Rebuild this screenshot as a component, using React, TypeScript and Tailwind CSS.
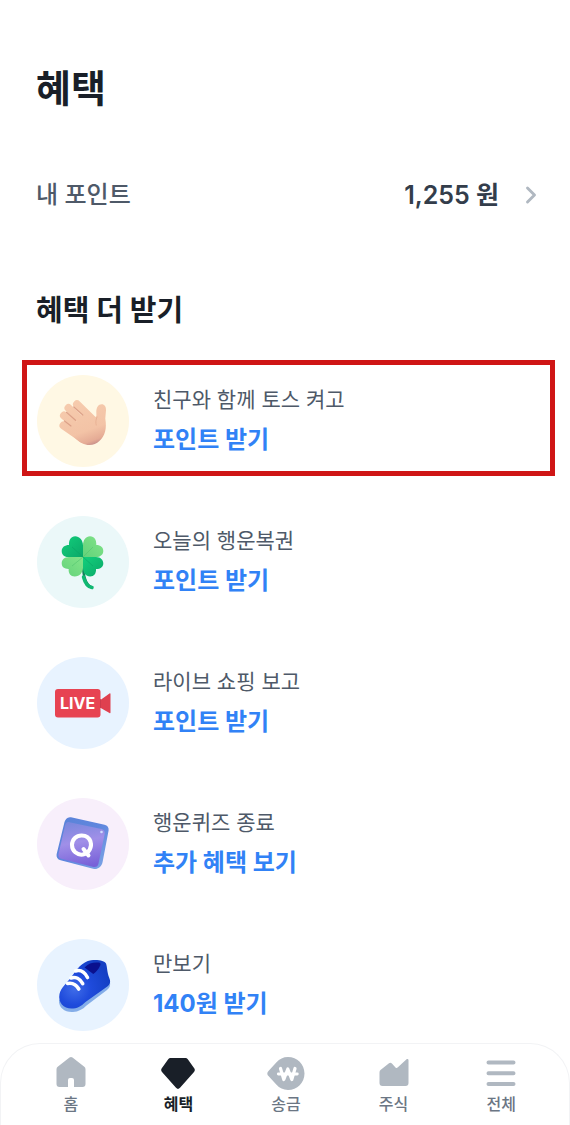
import React from 'react';
import { ChevronRight } from 'lucide-react';

function WaveIcon() {
  return (
    <svg className="h-full w-full" viewBox="0 0 92 92" aria-hidden="true">
      <defs>
        <linearGradient id="hand" gradientUnits="userSpaceOnUse" x1="38" y1="26" x2="55" y2="72">
          <stop offset="0" stopColor="#f6cbad" />
          <stop offset="0.65" stopColor="#f3c3a6" />
          <stop offset="0.88" stopColor="#e5ab95" />
          <stop offset="1" stopColor="#bd8587" />
        </linearGradient>
      </defs>
      <g stroke="url(#hand)" strokeWidth="8" strokeLinecap="round" fill="none">
        <path d="M26.500 50.500L46 64" />
        <path d="M27 40.500L46 57" />
        <path d="M31.500 33L50 51" />
        <path d="M40 29.300L57 46" />
      </g>
      <path
        d="M42 41l12-2.500c2 2 3.300 4 4.600 3.600 1.300-.5.7-2.800.7-5 0-4.500 2-7.800 5.300-7.800 3 0 4.500 2.500 4.400 6l-.7 8.200c.8 5 .8 9.500-.2 13-1.900 7.500-8 13.500-15.600 13.500-5.500 0-9.500-2.500-13.500-6L35 60z"
        fill="url(#hand)"
      />
      <path d="M29.500 37.300l9 8M36.800 32l9 8M27.500 46l6.500 5" stroke="#dca188" strokeWidth="1.200" strokeLinecap="round" fill="none" />
      <path d="M60 42c-1.300 3-1.500 5.500-.8 8" stroke="#e8b295" strokeWidth="1" strokeLinecap="round" fill="none" />
    </svg>
  );
}

function CloverIcon() {
  return (
    <svg className="h-full w-full" viewBox="0 0 92 92" aria-hidden="true">
      <defs>
        <linearGradient id="leafDark" x1="0" y1="0" x2="1" y2="1">
          <stop offset="0" stopColor="#13cf7c" />
          <stop offset="1" stopColor="#0aa868" />
        </linearGradient>
        <linearGradient id="leafLight" x1="1" y1="0" x2="0" y2="1">
          <stop offset="0" stopColor="#83e48a" />
          <stop offset="1" stopColor="#63d27a" />
        </linearGradient>
      </defs>
      <path d="M45.500 42C46 57 47 69.500 56 72" stroke="#14805a" strokeWidth="2.500" fill="none" />
      <path d="M46.500 61C48 67 51 71 55 71.500" stroke="#10b872" strokeWidth="3.400" fill="none" strokeLinecap="round" />
      <path d="M46 41H31c-4 0-6.500-2.800-6.300-6.300.2-3.300 3-5.700 7.300-5.700-.3-5 2-8.700 6.200-8.700 4 0 7.800 3.700 7.800 9.200z" fill="url(#leafDark)" />
      <path d="M46 41V29.500c0-5.500 3-9.200 7-9.200 4.500 0 6.600 3.700 6.300 8.700 4.400 0 7 2.400 7 5.900 0 3.500-2.800 6.100-7.300 6.100z" fill="url(#leafLight)" />
      <path d="M46 41H32c-4.500 0-7.300 2.800-7.300 6.300 0 3.700 2.700 5.800 7 5.700-.5 4.500 2 7.500 6 7.500 5 0 8.300-4 8.300-9z" fill="url(#leafLight)" />
      <path d="M46 41h13c4.500 0 7.300 2.900 7.300 6.400s-3 5.700-7.300 5.600c.3 4.600-2 7.500-5.800 7.500-4.500 0-7.200-4-7.200-9z" fill="url(#leafDark)" />
      <path d="M46 41L35 31M46 41l10 9" stroke="#0aa565" strokeWidth="0.600" fill="none" />
      <path d="M46 41l10-10M46 41L35 50" stroke="#52c46e" strokeWidth="0.600" fill="none" />
    </svg>
  );
}

function LiveIcon() {
  return (
    <svg className="h-full w-full" viewBox="0 0 92 92" aria-hidden="true">
      <path d="M62 44l10.500-7.600c.6-.4 1-.2 1 .5v18.700c0 .7-.5.9-1 .5L62 50z" fill="#df404f" />
      <rect x="18" y="32" width="45.500" height="28.500" rx="3" fill="#e74352" />
      <path d="M63.500 42v9" stroke="#c8394a" strokeWidth="0.800" />
      <text x="40.500" y="52" textAnchor="middle" fontSize="16" fontWeight="700" fill="#fff" className="font-['Inter',sans-serif]">
        LIVE
      </text>
    </svg>
  );
}

function QuizIcon() {
  return (
    <svg className="h-full w-full" viewBox="0 0 92 92" aria-hidden="true">
      <defs>
        <linearGradient id="cubeSide" x1="0" y1="0" x2="1" y2="1">
          <stop offset="0" stopColor="#5a83d8" />
          <stop offset="0.500" stopColor="#5f86de" />
          <stop offset="1" stopColor="#7fa8e6" />
        </linearGradient>
        <linearGradient id="cubeFace" x1="0.300" y1="0" x2="0.500" y2="1">
          <stop offset="0" stopColor="#7a88dd" />
          <stop offset="0.450" stopColor="#a08fe8" />
          <stop offset="1" stopColor="#7861d8" />
        </linearGradient>
      </defs>
      <path d="M34 19.300l33.500 7.500c3 .7 4.500 2.800 4.100 5.700l-6 31.500c-.5 2.500-1.500 4-3 5.200-2 1.600-4 2.200-6.500 1.600l-32.500-8.500c-3-.8-4.500-3-4-6l7.600-31c.7-3.700 3.500-6.800 6.800-6z" fill="url(#cubeSide)" />
      <path d="M32.500 24.200l32 6.700c2.500.5 3.700 2.400 3.200 5l-6.200 29.600c-.6 2.800-2.400 4-5 3.400l-32-8.100c-2.400-.6-3.500-2.300-3-4.800l6.500-28.300c.6-2.700 2-4 4.500-3.500z" fill="url(#cubeFace)" />
      <circle cx="64.500" cy="34" r="1.300" fill="#cfdcff" />
      <path d="M53.500 43.500c1.800 5.500-1.500 12-7.500 13-6 .9-11-3.500-11-9.500 0-5.600 4.500-9.800 9.800-9.600 4.200.1 7.500 2.500 8.700 6.100z" fill="none" stroke="#fff" strokeWidth="4" />
      <path d="M46.500 51l5 6.500" stroke="#fff" strokeWidth="4" strokeLinecap="round" />
    </svg>
  );
}

function ShoeIcon() {
  return (
    <svg className="h-full w-full" viewBox="0 0 92 92" aria-hidden="true">
      <defs>
        <radialGradient id="shoe" cx="0.300" cy="0.600" r="0.700">
          <stop offset="0" stopColor="#3f6ce8" />
          <stop offset="0.450" stopColor="#1f4bdc" />
          <stop offset="1" stopColor="#143fc4" />
        </radialGradient>
      </defs>
      <path d="M22 61c-.5 8 6 12.500 14 12 5.500-.4 9.500-2.500 13.500-6.500L70 51c3-2.500 3.400-4.500 3-8z" fill="#84ade8" />
      <path d="M22.500 55c1.500-6.500 7-10.500 12.200-17.500C39.500 31 45 22.500 54 21.300c6.500-.9 13.700.2 15 3.200 1.200 3 1.100 9.500 3.300 14.500 1.700 4 .7 6.500-2.300 8.800L48.500 63c-4.500 4.500-8.500 6.600-14 6.600C26.500 69.500 20.800 63.500 22.500 55z" fill="url(#shoe)" />
      <path d="M47.500 28.500c4-4.300 8.500-5.300 14-4.900 2 .2 2.500 1.300 1.600 3.200-1.600 3.500-3.600 6-6.800 8.200-2.700-1.800-5.200-4.300-8.800-6.500z" fill="#0a108e" />
      <path d="M38.500 32c5-1.500 9 .8 12 6.500M34 39c4.500-1.500 9 .7 11.700 5.700M30.500 44.500c5-1 8.500.8 11.300 5.500" stroke="#fff" strokeWidth="3.600" strokeLinecap="round" fill="none" />
    </svg>
  );
}

function HomeIcon() {
  return (
    <svg className="h-9 w-9" viewBox="0 0 36 36" fill="#b0b8c1" aria-hidden="true">
      <path d="M16.500 3.600a2.500 2.500 0 0 1 3 0l11.800 9.200c.8.600 1.200 1.500 1.200 2.500v14.700a3 3 0 0 1-3 3H21v-7a2 2 0 0 0-2-2h-2a2 2 0 0 0-2 2v7H6.500a3 3 0 0 1-3-3V15.300c0-1 .4-1.900 1.200-2.500z" />
    </svg>
  );
}

function BenefitIcon() {
  return (
    <svg className="h-9 w-9" viewBox="0 0 36 36" fill="#191f28" aria-hidden="true">
      <path d="M10.600 4h14.800c1 0 1.800.4 2.400 1.200l6.400 9c.9 1.200.8 2.600-.2 3.700L20 33.800a2.700 2.700 0 0 1-4 0L2 17.900c-1-1.100-1.100-2.500-.2-3.700l6.400-9c.6-.8 1.400-1.200 2.400-1.200z" />
    </svg>
  );
}

function TransferIcon() {
  return (
    <svg className="h-9 w-10" viewBox="0 0 40 36" aria-hidden="true">
      <path d="M22 3c9.200 0 16.500 7.300 16.500 16.500S31.200 36 22 36c-4.800 0-8.500-2-11.500-5.200l-8-8.700c-1.600-1.700-1.600-3.500 0-5.200l8-8.700C13.500 5 17.200 3 22 3z" fill="#b0b8c1" />
      <path d="M14.500 14.500l3.300 11L21.800 15l4 10.500L29 14.500" stroke="#fff" strokeWidth="3.200" strokeLinecap="round" strokeLinejoin="round" fill="none" />
      <path d="M12.300 20h19" stroke="#fff" strokeWidth="2.800" strokeLinecap="round" />
    </svg>
  );
}

function StockIcon() {
  return (
    <svg className="h-9 w-9" viewBox="0 0 36 36" fill="#b0b8c1" aria-hidden="true">
      <path d="M3.500 18.500c0-1 .3-1.700 1-2.400l8.500-6.800c1-.8 2-.7 2.900.2L19.500 13.500c.7.700 1.400.7 2.100.1l8.700-8.100c1-.9 2.200-.5 2.200.8V29a3 3 0 0 1-3 3h-23a3 3 0 0 1-3-3z" />
    </svg>
  );
}

function MenuIcon() {
  return (
    <svg className="h-9 w-9" viewBox="0 0 36 36" stroke="#b0b8c1" strokeWidth="4" strokeLinecap="round" aria-hidden="true">
      <path d="M5.500 8.500h25M5.500 19.300h25M5.500 30h25" />
    </svg>
  );
}

const benefits = [
  { title: '친구와 함께 토스 켜고', action: '포인트 받기', bg: 'bg-[#fff8e4]', border: 'border-[#cf1515]', Icon: WaveIcon },
  { title: '오늘의 행운복권', action: '포인트 받기', bg: 'bg-[#ebf8f9]', border: 'border-transparent', Icon: CloverIcon },
  { title: '라이브 쇼핑 보고', action: '포인트 받기', bg: 'bg-[#e8f3ff]', border: 'border-transparent', Icon: LiveIcon },
  { title: '행운퀴즈 종료', action: '추가 혜택 보기', bg: 'bg-[#f8effb]', border: 'border-transparent', Icon: QuizIcon },
  { title: '만보기', action: '140원 받기', bg: 'bg-[#e8f3ff]', border: 'border-transparent', Icon: ShoeIcon },
];

const tabs = [
  { label: '홈', Icon: HomeIcon, active: false },
  { label: '혜택', Icon: BenefitIcon, active: true },
  { label: '송금', Icon: TransferIcon, active: false },
  { label: '주식', Icon: StockIcon, active: false },
  { label: '전체', Icon: MenuIcon, active: false },
];

function BenefitList() {
  return (
    <ul className="mt-[29px] flex flex-col gap-[25px] pr-[15px] pl-[22px]">
      {benefits.map(({ title, action, bg, border, Icon }) => (
        <li key={title} className={`border-5 ${border}`}>
          <a href="#" className="flex items-center gap-6 px-[10px] pt-[10px] pb-1">
            <span className={`h-[92px] w-[92px] shrink-0 overflow-hidden rounded-full ${bg}`}>
              <Icon />
            </span>
            <span className="flex flex-col pb-[2px]">
              <span className="text-[21px] leading-10 text-[#4e5968]">{title}</span>
              <span className="text-2xl leading-10 font-bold text-[#3182f6]">{action}</span>
            </span>
          </a>
        </li>
      ))}
    </ul>
  );
}

function TabBar() {
  return (
    <nav className="sticky bottom-0 mt-auto grid h-[82px] grid-cols-5 rounded-t-[40px] border border-b-0 border-[#f2f3f5] bg-white pt-[10px] pr-[14px] pl-4">
      {tabs.map(({ label, Icon, active }) => (
        <a
          key={label}
          href="#"
          aria-current={active ? 'page' : undefined}
          className={`flex flex-col items-center text-base leading-7 ${active ? 'font-bold text-[#191f28]' : 'font-medium text-[#6b7684]'}`}
        >
          <Icon />
          <span>{label}</span>
        </a>
      ))}
    </nav>
  );
}

export default function App() {
  return (
    <div className="flex min-h-screen flex-col bg-white font-['Inter','Noto_Sans_CJK_KR',sans-serif]">
      <main>
        <h1 className="px-9 pt-16 text-[38px] leading-12 font-bold text-[#191f28]">혜택</h1>
        <a href="#" className="mt-[63px] flex items-center justify-between pr-[25px] pl-9">
          <span className="text-2xl leading-10 font-medium text-[#4e5968]">내 포인트</span>
          <span className="flex items-center gap-[18px] text-[25px] leading-10 font-semibold text-[#333d4b]">
            1,255 원
            <ChevronRight className="h-7 w-7 text-[#b0b8c1]" strokeWidth={2.5} />
          </span>
        </a>
        <h2 className="mt-19 px-9 text-[29px] leading-10 font-bold text-[#191f28]">혜택 더 받기</h2>
        <BenefitList />
      </main>
      <TabBar />
    </div>
  );
}
